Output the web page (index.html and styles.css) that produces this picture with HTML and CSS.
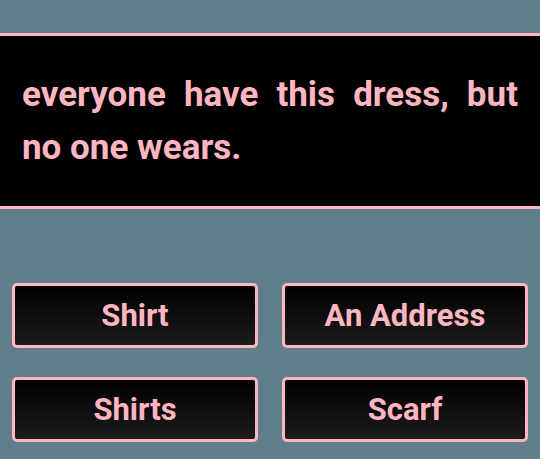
FILE: index.html
```html
<!DOCTYPE html>
<html>
<head>
<meta charset="utf-8">
<link rel="stylesheet" href="styles.css">
</head>
<body>
<div class="question">
  <p class="question-text">everyone have this dress, but no one wears.</p>
</div>
<div class="answers">
  <button class="answer">Shirt</button>
  <button class="answer">An Address</button>
  <button class="answer">Shirts</button>
  <button class="answer">Scarf</button>
</div>
</body>
</html>
```
FILE: styles.css
```css
html, body {
  margin: 0;
  padding: 0;
  background: #607d8b;
  font-family: Roboto, "Liberation Sans", sans-serif;
  width: 540px;
  height: 459px;
  overflow: hidden;
}
body {
  padding-top: 33px;
  box-sizing: border-box;
}
.question {
  background: #000;
  border-top: 3px solid #ffb6c1;
  border-bottom: 3px solid #ffb6c1;
  height: 176px;
  box-sizing: border-box;
  padding: 32px 22px 0 22px;
}
.question-text {
  margin: 0;
  color: #ffb6c1;
  font-size: 35px;
  font-weight: 700;
  line-height: 53px;
  text-align: justify;
}
.answers {
  margin-top: 74px;
  padding: 0 12px;
  display: grid;
  grid-template-columns: 246px 246px;
  grid-auto-rows: 65px;
  column-gap: 24px;
  row-gap: 29px;
}
.answer {
  margin: 0;
  border: 3px solid #ffb6c1;
  border-radius: 5px;
  background: linear-gradient(to bottom, #000 0%, #1c1c1c 100%);
  color: #ffb6c1;
  font-family: Roboto, "Liberation Sans", sans-serif;
  font-size: 31px;
  font-weight: 700;
  display: flex;
  align-items: center;
  justify-content: center;
  padding: 0;
}
```
